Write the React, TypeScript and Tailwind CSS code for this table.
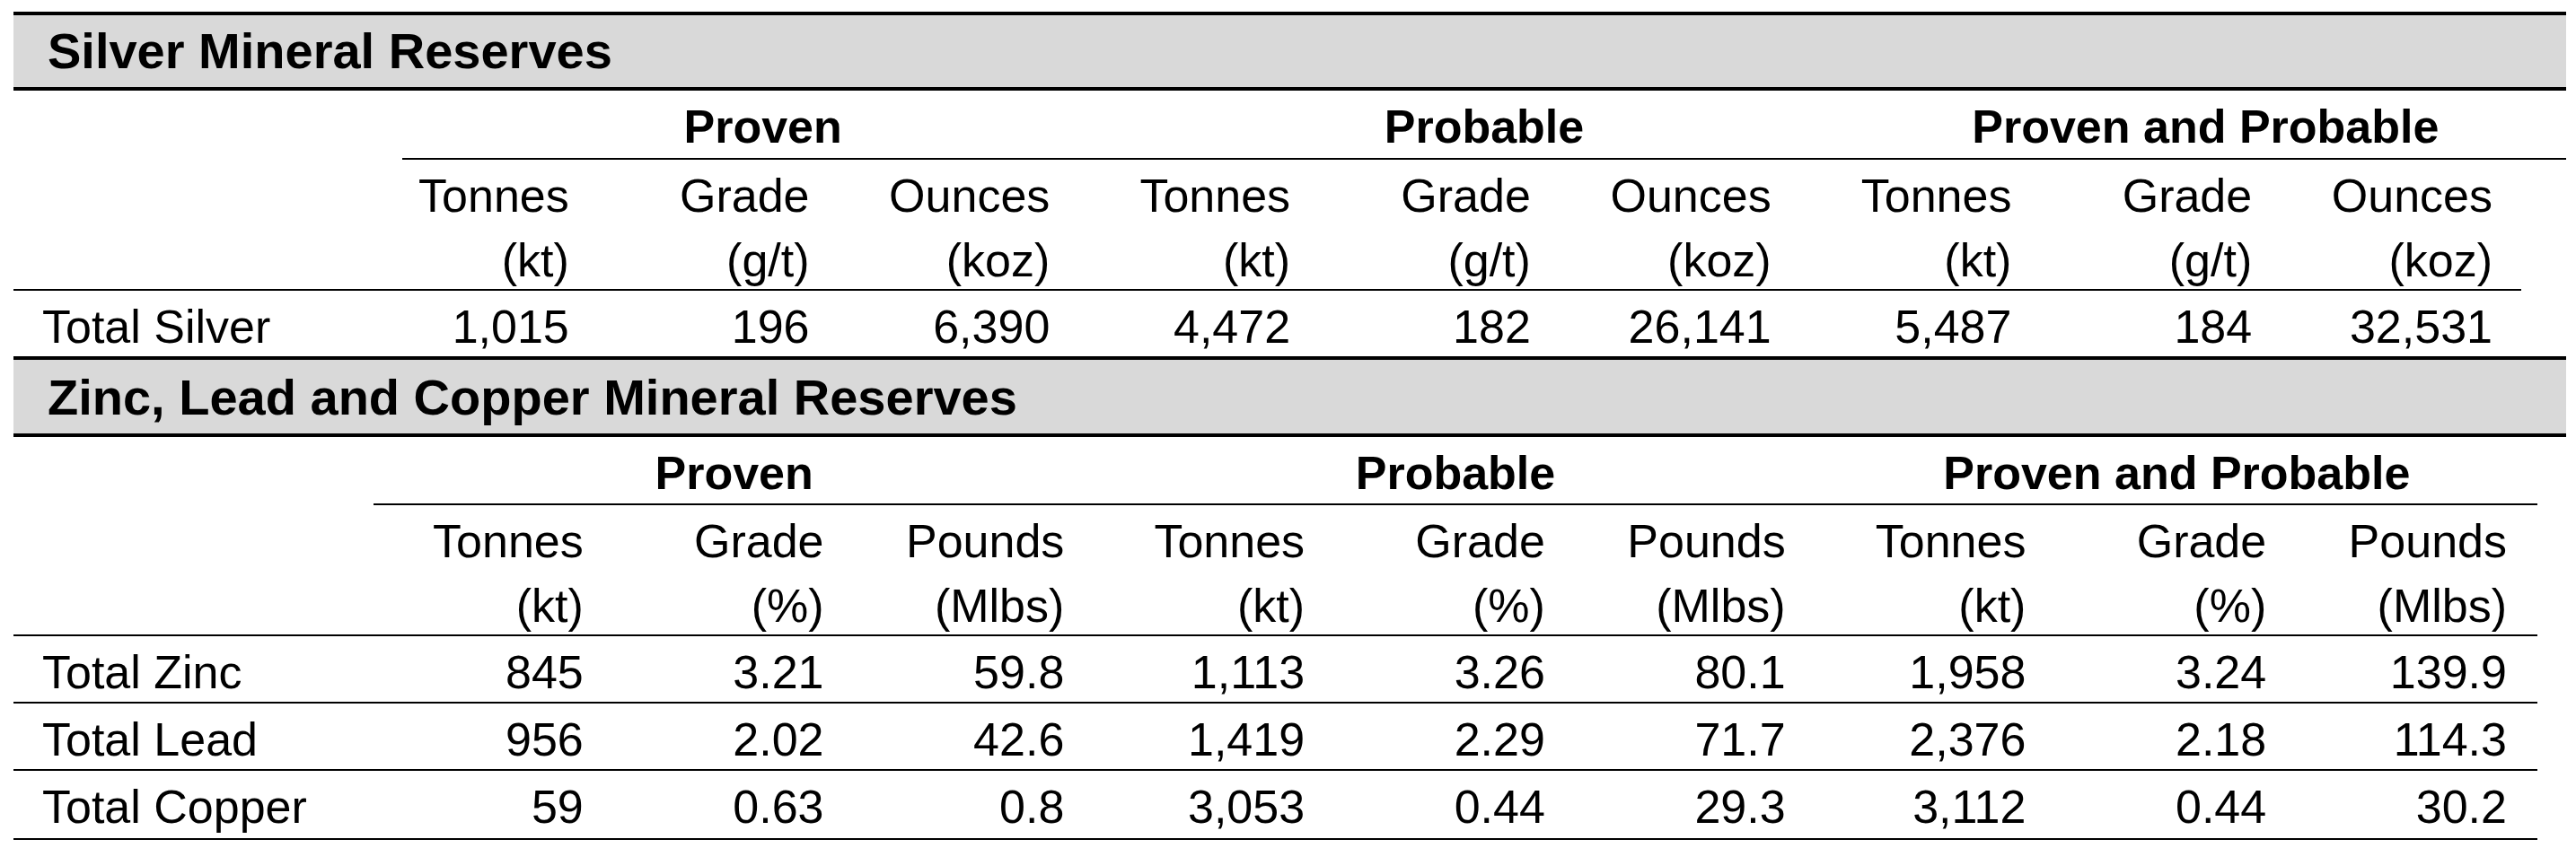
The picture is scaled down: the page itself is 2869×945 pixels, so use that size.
const silverCols = [
  ["Tonnes", "(kt)"],
  ["Grade", "(g/t)"],
  ["Ounces", "(koz)"],
]

const baseCols = [
  ["Tonnes", "(kt)"],
  ["Grade", "(%)"],
  ["Pounds", "(Mlbs)"],
]

const groups = ["Proven", "Probable", "Proven and Probable"]

const silverRow = ["1,015", "196", "6,390", "4,472", "182", "26,141", "5,487", "184", "32,531"]

const baseRows = [
  { name: "Total Zinc", values: ["845", "3.21", "59.8", "1,113", "3.26", "80.1", "1,958", "3.24", "139.9"], h: "h-[75px]" },
  { name: "Total Lead", values: ["956", "2.02", "42.6", "1,419", "2.29", "71.7", "2,376", "2.18", "114.3"], h: "h-[75px]" },
  { name: "Total Copper", values: ["59", "0.63", "0.8", "3,053", "0.44", "29.3", "3,112", "0.44", "30.2"], h: "h-[77px]" },
]

function SilverTable() {
  return (
    <div className="ml-[15px] w-[2843px] pt-[13px]">
      <div className="h-[88px] border-y-4 border-black bg-[#d9d9d9] pl-[38px] pt-[4px] text-[56px] font-bold">
        Silver Mineral Reserves
      </div>

      <div className="grid h-[75px] grid-cols-[433px_repeat(3,minmax(0,1fr))] pt-[4px] font-bold">
        <div />
        {groups.map((g) => (
          <div key={g} className="text-center">
            {g}
          </div>
        ))}
      </div>
      <div className="ml-[433px] h-[2px] bg-black" />

      <div className="grid h-[144px] grid-cols-[433px_repeat(9,minmax(0,1fr))] pt-[4px]">
        <div />
        {[0, 1, 2].flatMap((g) =>
          silverCols.map(([a, b]) => (
            <div key={`${g}-${a}`} className="pr-[82px] text-right">
              <div>{a}</div>
              <div>{b}</div>
            </div>
          ))
        )}
      </div>
      <div className="h-[2px] w-[2793px] bg-black" />

      <div className="grid h-[77px] grid-cols-[433px_repeat(9,minmax(0,1fr))] border-b-4 border-black pt-[4px]">
        <div className="pl-[32px]">Total Silver</div>
        {silverRow.map((v, i) => (
          <div key={i} className="pr-[82px] text-right">
            {v}
          </div>
        ))}
      </div>
    </div>
  )
}

function BaseMetalTable() {
  return (
    <div className="ml-[15px] w-[2843px]">
      <div className="h-[86px] border-b-4 border-black bg-[#d9d9d9] pl-[38px] pt-[6px] text-[56px] font-bold">
        Zinc, Lead and Copper Mineral Reserves
      </div>

      <div className="w-[2811px]">
        <div className="grid h-[74px] grid-cols-[401px_repeat(3,minmax(0,1fr))] pt-[4px] font-bold">
          <div />
          {groups.map((g) => (
            <div key={g} className="text-center">
              {g}
            </div>
          ))}
        </div>
        <div className="ml-[401px] h-[2px] bg-black" />

        <div className="grid h-[144px] grid-cols-[401px_repeat(9,minmax(0,1fr))] pt-[4px]">
          <div />
          {[0, 1, 2].flatMap((g) =>
            baseCols.map(([a, b]) => (
              <div key={`${g}-${a}`} className="pr-[34px] text-right">
                <div>{a}</div>
                <div>{b}</div>
              </div>
            ))
          )}
        </div>
        <div className="h-[2px] bg-black" />

        {baseRows.map((row) => (
          <div
            key={row.name}
            className={`grid grid-cols-[401px_repeat(9,minmax(0,1fr))] border-b-2 border-black pt-[4px] ${row.h}`}
          >
            <div className="pl-[32px]">{row.name}</div>
            {row.values.map((v, i) => (
              <div key={i} className="pr-[34px] text-right">
                {v}
              </div>
            ))}
          </div>
        ))}
      </div>
    </div>
  )
}

export default function App() {
  return (
    <div className="h-[945px] w-[2869px] overflow-hidden bg-white font-['Liberation_Sans',Arial,sans-serif] text-[52px] leading-[72px] text-black">
      <SilverTable />
      <BaseMetalTable />
    </div>
  )
}
